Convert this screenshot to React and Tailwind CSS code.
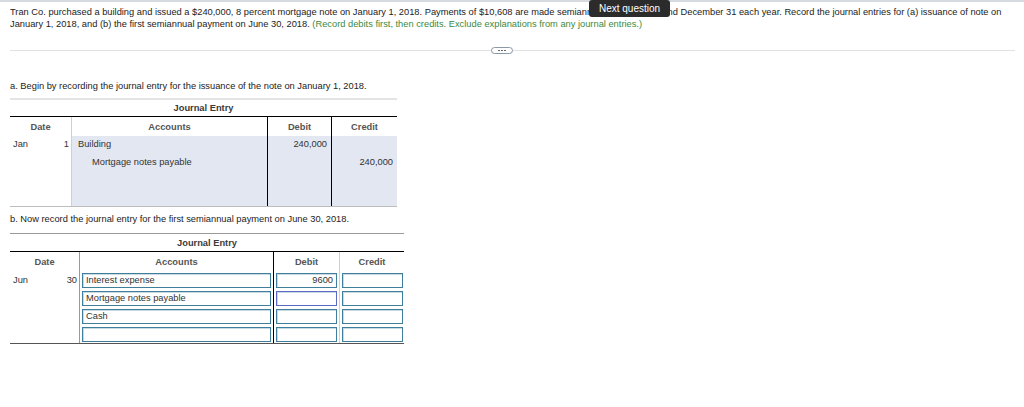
const entryA = [
  { month: "Jan", day: "1", account: "Building", debit: "240,000", credit: "" },
  { month: "", day: "", account: "Mortgage notes payable", indent: true, debit: "", credit: "240,000" },
  { month: "", day: "", account: "", debit: "", credit: "" },
  { month: "", day: "", account: "", debit: "", credit: "" },
];

const entryB = [
  { month: "Jun", day: "30", account: "Interest expense", debit: "9600", credit: "" },
  { month: "", day: "", account: "Mortgage notes payable", debit: "", credit: "", focus: true },
  { month: "", day: "", account: "Cash", debit: "", credit: "" },
  { month: "", day: "", account: "", debit: "", credit: "" },
];

function Field({ value, right, focus }) {
  return (
    <div
      className={
        "h-[15px] w-full bg-white border px-[3px] text-[9.3px] leading-[13px] text-[#333] truncate shadow-[inset_1px_1px_0_#c9dae3] " +
        (focus ? "border-[#5b68c4]" : "border-[#3f7f9c]") +
        (right ? " text-right" : "")
      }
    >
      {value}
    </div>
  );
}

function EntryA() {
  return (
    <div className="w-[387px] border-t-2 border-[#e4e4e4]">
      <div className="h-[17px] text-center text-[9.3px] leading-[17px] font-bold text-[#3a3a3a] border-b border-black">
        Journal Entry
      </div>
      <div className="grid grid-cols-[62px_196px_64px_65px] h-[19px] text-[9.3px] leading-[20px] font-bold text-[#555] text-center">
        <div className="border-r border-[#d0d0d0]">Date</div>
        <div className="border-r border-black">Accounts</div>
        <div className="border-r border-black">Debit</div>
        <div>Credit</div>
      </div>
      {entryA.map((r, i) => (
        <div key={i} className="grid grid-cols-[62px_196px_64px_65px] h-[17.5px] text-[9.3px] leading-[17px] text-[#333]">
          <div className="flex justify-between pl-[3px] pr-[2px] border-r border-[#d0d0d0]">
            <span>{r.month}</span>
            <span>{r.day}</span>
          </div>
          <div className={"bg-[#e3e7f1] border-r border-black " + (r.indent ? "pl-[20px]" : "pl-[6px]")}>{r.account}</div>
          <div className="bg-[#e3e7f1] border-r border-black text-right pr-[4px]">{r.debit}</div>
          <div className="bg-[#e3e7f1] text-right pr-[4px]">{r.credit}</div>
        </div>
      ))}
      <div className="border-t border-[#bdbdbd]" />
    </div>
  );
}

function EntryB() {
  return (
    <div className="w-[394px] border-t border-[#9a9a9a]">
      <div className="h-[18px] text-center text-[9.3px] leading-[19px] font-bold text-[#3a3a3a] border-b border-black">
        Journal Entry
      </div>
      <div className="grid grid-cols-[70px_194px_66px_64px] h-[19px] text-[9.3px] leading-[20px] font-bold text-[#555] text-center">
        <div className="border-r border-[#9a9a9a]">Date</div>
        <div className="border-r border-black">Accounts</div>
        <div className="border-r border-[#d0d0d0]">Debit</div>
        <div>Credit</div>
      </div>
      {entryB.map((r, i) => (
        <div key={i} className="grid grid-cols-[70px_194px_66px_64px] h-[18px] text-[9.3px] text-[#333]">
          <div className="flex justify-between pl-[3px] pr-[2px] leading-[19px] border-r border-[#9a9a9a]">
            <span>{r.month}</span>
            <span>{r.day}</span>
          </div>
          <div className="border-r border-black px-[2px] pt-[2px]">
            <Field value={r.account} />
          </div>
          <div className="border-r border-[#d0d0d0] px-[2px] pt-[2px]">
            <Field value={r.debit} right focus={r.focus} />
          </div>
          <div className="px-[2px] pt-[2px] pr-[1px]">
            <Field value={r.credit} />
          </div>
        </div>
      ))}
      <div className="border-t-[1.5px] border-[#555]" />
    </div>
  );
}

export default function App() {
  return (
    <div className="relative min-h-[407px] bg-white border-t-2 border-[#d7dbe0] font-['Liberation_Sans',Arial,sans-serif] text-[#222]">
      <div className="px-[10px] pt-[4px] text-[9.3px] leading-[12px]">
        Tran Co. purchased a building and issued a $240,000, 8 percent mortgage note on January 1, 2018. Payments of $10,608 are made semiannually on June 30 and December 31 each year. Record the journal entries for (a) issuance of note on
        <br />
        January 1, 2018, and (b) the first semiannual payment on June 30, 2018.{" "}
        <span className="text-[#3b8a3e]">(Record debits first, then credits. Exclude explanations from any journal entries.)</span>
      </div>

      <div className="relative ml-[10px] mr-[9px] mt-[20px] h-px bg-[#e2e2e2]">
        <div className="absolute left-[481px] top-[-3px] flex h-[7px] w-[22px] items-center justify-center gap-[1.5px] rounded-full border border-[#8b98a5] bg-white">
          <span className="h-[1.5px] w-[1.5px] bg-[#666]" />
          <span className="h-[1.5px] w-[1.5px] bg-[#666]" />
          <span className="h-[1.5px] w-[1.5px] bg-[#666]" />
        </div>
      </div>

      <div className="px-[10px]">
        <div className="mt-[29px] text-[9.3px] leading-[12px]">a. Begin by recording the journal entry for the issuance of the note on January 1, 2018.</div>
        <div className="mt-[6px]">
          <EntryA />
        </div>
        <div className="mt-[6px] text-[9.3px] leading-[12px]">b. Now record the journal entry for the first semiannual payment on June 30, 2018.</div>
        <div className="mt-[8px]">
          <EntryB />
        </div>
      </div>

      <div className="absolute left-[589px] top-[-2px] flex h-[17px] w-[81px] items-center justify-center rounded-[3px] bg-[#2b2b2b] text-[10px] text-white">
        Next question
      </div>
    </div>
  );
}
